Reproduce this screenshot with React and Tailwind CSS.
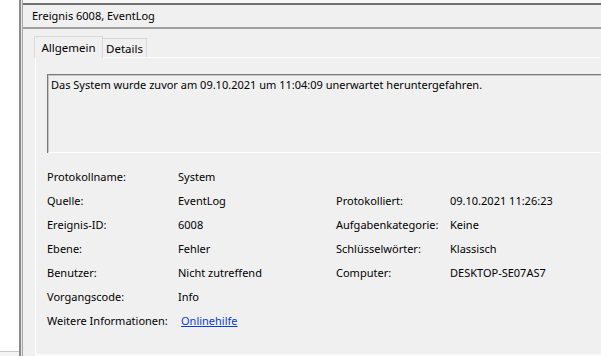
export default function App() {
  const rows = [
    ["Protokollname:", "System", "", ""],
    ["Quelle:", "EventLog", "Protokolliert:", "09.10.2021 11:26:23"],
    ["Ereignis-ID:", "6008", "Aufgabenkategorie:", "Keine"],
    ["Ebene:", "Fehler", "Schlüsselwörter:", "Klassisch"],
    ["Benutzer:", "Nicht zutreffend", "Computer:", "DESKTOP-SE07AS7"],
    ["Vorgangscode:", "Info", "", ""],
    ["Weitere Informationen:", "__link__", "", ""],
  ];
  return (
    <div
      className="w-[601px] h-[356px] flex bg-white overflow-hidden text-black text-[11px] leading-[16px]"
      style={{ fontFamily: '"Noto Sans", "Open Sans", sans-serif' }}
    >
      {/* left white strip */}
      <div className="w-[19px] h-full flex flex-col bg-white">
        <div className="flex-1" />
        <div className="h-[1px] bg-[#c8c8c8]" />
        <div className="h-[4px] bg-[#f4f4f4]" />
      </div>
      {/* double vertical line */}
      <div className="w-[2px] h-full bg-[#8a8a8a]" />
      <div className="w-[1px] h-full bg-[#e6e6e6]" />
      <div className="w-[1px] h-full bg-[#a6a6a6]" />
      {/* main */}
      <div className="flex-1 h-full flex flex-col bg-[#f0f0f0]">
        <div className="h-[3px] bg-[#f7f7f7]" />
        <div className="h-[2px] bg-[#6f6f6f]" />
        <div className="h-[22px] flex items-center pl-[9px] text-[11px]">
          <span>Ereignis 6008, EventLog</span>
        </div>
        <div className="h-[2px] bg-[#a0a0a0]" />
        {/* tabs */}
        <div className="h-[28px] flex items-end pl-[11px] text-[11.5px]">
          <div className="h-[22px] w-[69px] border-t border-l border-r border-[#d9d9d9] bg-[#f0f0f0] flex items-center justify-center relative top-[1px] z-10">
            <span className="pt-[1px]">Allgemein</span>
          </div>
          <div className="h-[19px] w-[44px] border-t border-r border-[#d9d9d9] bg-[#f0f0f0] flex items-center justify-center">
            <span className="pt-[1px]">Details</span>
          </div>
        </div>
        {/* panel */}
        <div className="flex-1 ml-[12px] border-t border-l border-[#ffffff] border-b-0 flex flex-col">
          <div className="flex-1 flex flex-col pl-[11px]">
            <div className="mt-[16px] h-[79px] border-t border-l border-[#7a7a7a] bg-[#f0f0f0] flex flex-col">
              <div className="flex-1 border-t border-l border-[#c6c6c6] border-b border-b-white pl-[2px] pt-[1px]">
                Das System wurde zuvor am 09.10.2021 um 11:04:09 unerwartet heruntergefahren.
              </div>
            </div>
            <div className="mt-[12px] grid grid-cols-[131px_158px_114px_1fr]">
              {rows.map((r, i) => (
                <div key={i} className="contents">
                  <div className="h-[24px] flex items-center whitespace-nowrap">{r[0]}</div>
                  <div className="h-[24px] flex items-center whitespace-nowrap">
                    {r[1] === "__link__" ? (
                      <span className="text-[#0a3ed0] underline pl-[3px]">Onlinehilfe</span>
                    ) : (
                      r[1]
                    )}
                  </div>
                  <div className="h-[24px] flex items-center whitespace-nowrap">{r[2]}</div>
                  <div className="h-[24px] flex items-center whitespace-nowrap">{r[3]}</div>
                </div>
              ))}
            </div>
          </div>
          <div className="h-[2px] bg-[#fafafa]" />
        </div>
      </div>
    </div>
  );
}
